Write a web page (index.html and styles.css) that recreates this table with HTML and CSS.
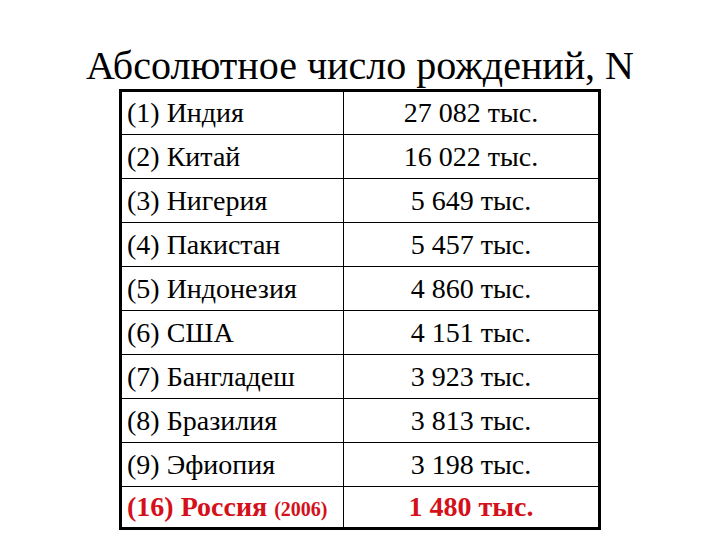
FILE: index.html
```html
<!DOCTYPE html>
<html lang="ru">
<head>
<meta charset="utf-8">
<link rel="stylesheet" href="styles.css">
</head>
<body>
<div class="slide">
  <h1 class="title">Абсолютное число рождений, N</h1>
  <table class="births">
    <tr><td class="country">(1) Индия</td><td class="num">27 082 тыс.</td></tr>
    <tr><td class="country">(2) Китай</td><td class="num">16 022 тыс.</td></tr>
    <tr><td class="country">(3) Нигерия</td><td class="num">5 649 тыс.</td></tr>
    <tr><td class="country">(4) Пакистан</td><td class="num">5 457 тыс.</td></tr>
    <tr><td class="country">(5) Индонезия</td><td class="num">4 860 тыс.</td></tr>
    <tr><td class="country">(6) США</td><td class="num">4 151 тыс.</td></tr>
    <tr><td class="country">(7) Бангладеш</td><td class="num">3 923 тыс.</td></tr>
    <tr><td class="country">(8) Бразилия</td><td class="num">3 813 тыс.</td></tr>
    <tr><td class="country">(9) Эфиопия</td><td class="num">3 198 тыс.</td></tr>
    <tr class="russia"><td class="country">(16) Россия <span class="year">(2006)</span></td><td class="num">1 480 тыс.</td></tr>
  </table>
</div>
</body>
</html>
```
FILE: styles.css
```css
html, body {
  margin: 0;
  padding: 0;
  background: #ffffff;
}
.slide {
  width: 720px;
  height: 540px;
  display: flex;
  flex-direction: column;
  align-items: center;
  font-family: "Liberation Serif", "Times New Roman", serif;
  color: #000;
}
.title {
  margin: 42px 0 0 0;
  font-weight: normal;
  font-size: 40px;
  line-height: 47px;
  height: 47px;
  white-space: nowrap;
}
.births {
  border-collapse: collapse;
  border: 3px solid #000;
  width: 482px;
  font-size: 28px;
}
.births td {
  border: 1px solid #000;
  height: 44px;
  padding: 0;
  box-sizing: border-box;
  white-space: nowrap;
}
.births td.country {
  width: 223px;
  padding-left: 5px;
  text-align: left;
}
.births td.num {
  text-align: center;
}
.russia td {
  color: #d4101a;
  font-weight: bold;
  height: 42px;
}
.births .russia td {
  height: 42px;
}
.year {
  font-size: 20px;
}
```
